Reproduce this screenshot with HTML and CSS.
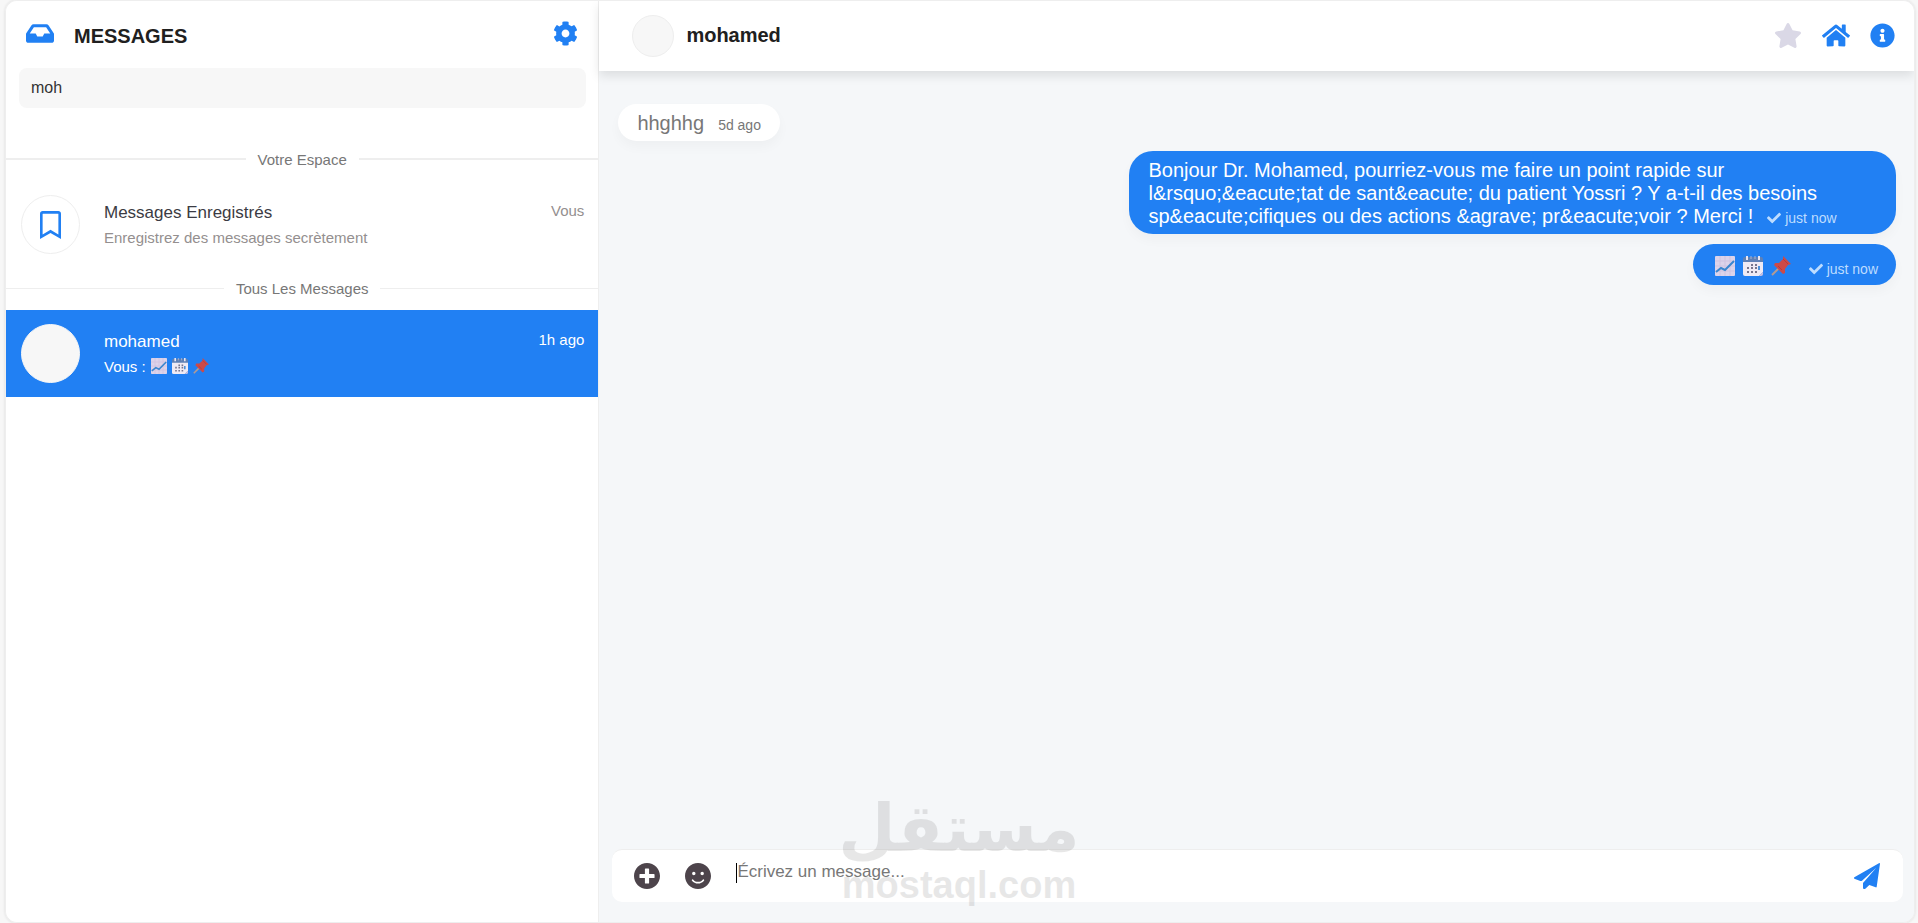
FILE: index.html
```html
<!DOCTYPE html>
<html lang="fr">
<head>
  <meta charset="UTF-8" />
  <meta name="viewport" content="width=device-width, initial-scale=1.0"/>
  <title>Messages</title>
  <link rel="stylesheet" href="styles.css">
</head>
<body>
  <!-- shared icons -->
  <svg class="sprite" aria-hidden="true">
    <symbol id="check" viewBox="0 0 512 512"><path d="M173.898 439.404l-166.4-166.4c-9.997-9.997-9.997-26.206 0-36.204l36.203-36.204c9.997-9.998 26.207-9.998 36.204 0L192 312.69 432.095 72.596c9.997-9.997 26.207-9.997 36.204 0l36.203 36.204c9.997 9.997 9.997 26.206 0 36.204l-294.4 294.401c-9.998 9.997-26.207 9.997-36.204-.001z"/></symbol>
    <symbol id="chart" viewBox="0 0 20 20">
      <rect width="20" height="20" rx="1" fill="#dcd3ea"/>
      <path d="M5 0v20M10 0v20M15 0v20M0 5h20M0 10h20M0 15h20" stroke="#cfc3e0" stroke-width="1"/>
      <path d="M1 16l5-4 4 2 9-9" fill="none" stroke="#3a86cf" stroke-width="2"/>
    </symbol>
    <symbol id="calendar" viewBox="0 0 20 20">
      <path d="M0 5h20v11l-4 4H2a2 2 0 0 1-2-2z" fill="#efeaf4"/>
      <path d="M0 6V3a2 2 0 0 1 2-2h16a2 2 0 0 1 2 2v3z" fill="#5f80b5"/>
      <path d="M4 0v4M16 0v4" stroke="#e9e6f1" stroke-width="2"/>
      <path d="M8 0v3M12 0v3" stroke="#a9b4d0" stroke-width="1"/>
      <path d="M20 16l-4 4h2a2 2 0 0 0 2-2z" fill="#cbbfe0"/>
      <path d="M8 8h2v2H8zM12 8h2v2h-2zM4 11h2v2H4zM8 11h2v2H8zM12 11h2v2h-2zM4 15h2v2H4zM8 15h2v2H8zM12 15h2v2h-2z" fill="#77758c"/>
      <path d="M15 10h2v4h-2z" fill="#4d90d8"/>
    </symbol>
    <symbol id="pin" viewBox="0 0 20 20">
      <path d="M1 19l7-7" stroke="#b39a93" stroke-width="2"/>
      <path d="M12 0l8 8-3 1-3 4v4l-2 1-9-9 1-2h4l4-4z" fill="#cd4a48"/>
      <path d="M12 3l5 5M7 10l4 4" stroke="#b93a3c" stroke-width="1"/>
    </symbol>
  </svg>

  <div class="messenger">
    <aside class="sidebar">
      <header class="sidebar-header">
        <svg class="inbox" viewBox="0 0 576 512" aria-hidden="true"><path d="M567.938 243.908L462.25 85.374A48.003 48.003 0 0 0 422.311 64H153.689a48 48 0 0 0-39.938 21.374L8.062 243.908A47.994 47.994 0 0 0 0 270.533V400c0 26.51 21.49 48 48 48h480c26.51 0 48-21.49 48-48V270.533a47.994 47.994 0 0 0-8.062-26.625zM162.252 128h251.497l85.333 128H376l-32 64H232l-32-64H76.918l85.334-128z"/></svg>
        <h1>MESSAGES</h1>
        <button class="icon-btn" aria-label="Paramètres">
          <svg class="icon" viewBox="0 0 512 512"><path d="M487.4 315.7l-42.6-24.6c4.3-23.2 4.3-47 0-70.2l42.6-24.6c4.9-2.8 7.1-8.6 5.5-14-11.1-35.6-30-67.8-54.7-94.6-3.8-4.1-10-5.1-14.8-2.3L380.8 110c-17.9-15.4-38.5-27.3-60.8-35.1V25.8c0-5.6-3.9-10.5-9.4-11.7-36.7-8.2-74.3-7.8-109.2 0-5.5 1.2-9.4 6.1-9.4 11.7V75c-22.2 7.9-42.8 19.8-60.8 35.1L88.7 85.5c-4.9-2.8-11-1.9-14.8 2.3-24.7 26.7-43.6 58.9-54.7 94.6-1.7 5.4.6 11.2 5.5 14L67.3 221c-4.3 23.2-4.3 47 0 70.2l-42.6 24.6c-4.9 2.8-7.1 8.6-5.5 14 11.1 35.6 30 67.8 54.7 94.6 3.8 4.1 10 5.1 14.8 2.3l42.6-24.6c17.9 15.4 38.5 27.3 60.8 35.1v49.2c0 5.6 3.9 10.5 9.4 11.7 36.7 8.2 74.3 7.8 109.2 0 5.5-1.2 9.4-6.1 9.4-11.7v-49.2c22.2-7.9 42.8-19.8 60.8-35.1l42.6 24.6c4.9 2.8 11 1.9 14.8-2.3 24.7-26.7 43.6-58.9 54.7-94.6 1.5-5.5-.7-11.3-5.6-14.1zM256 336c-44.1 0-80-35.9-80-80s35.9-80 80-80 80 35.9 80 80-35.9 80-80 80z"/></svg>
        </button>
      </header>
      <input type="text" class="search" aria-label="Rechercher" value="moh">

      <h2 class="divider divider-thick">Votre Espace</h2>
      <a href="#" class="contact">
        <span class="avatar avatar-saved"><svg class="bookmark" viewBox="0 0 384 512" aria-hidden="true"><path d="M336 0H48C21.49 0 0 21.49 0 48v464l192-112 192 112V48c0-26.51-21.49-48-48-48zm0 428.43l-144-84-144 84V54a6 6 0 0 1 6-6h276c3.314 0 6 2.683 6 5.996V428.43z"/></svg></span>
        <span class="contact-body">
          <span class="contact-name">Messages Enregistrés</span>
          <span class="contact-text">Enregistrez des messages secrètement</span>
        </span>
        <span class="contact-time">Vous</span>
      </a>

      <h2 class="divider">Tous Les Messages</h2>
      <a href="#" class="contact active">
        <span class="avatar"></span>
        <span class="contact-body">
          <span class="contact-name">mohamed</span>
          <span class="contact-text">Vous :
            <svg class="emoji-small"><use href="#chart"/></svg>
            <svg class="emoji-small"><use href="#calendar"/></svg>
            <svg class="emoji-small"><use href="#pin"/></svg>
          </span>
        </span>
        <span class="contact-time">1h ago</span>
      </a>
    </aside>

    <main class="chat">
      <header class="chat-header">
        <span class="avatar avatar-small"></span>
        <a href="#" class="chat-name">mohamed</a>
        <nav class="chat-actions">
          <button class="icon-btn favorite" aria-label="Favori">
            <svg class="icon-wide" viewBox="0 0 576 512"><path d="M259.3 17.8L194 150.2 47.9 171.5c-26.2 3.8-36.7 36.1-17.7 54.6l105.7 103-25 145.5c-4.5 26.3 23.2 46 46.4 33.7L288 439.6l130.7 68.7c23.2 12.2 50.9-7.4 46.4-33.7l-25-145.5 105.7-103c19-18.5 8.5-50.8-17.7-54.6L382 150.2 316.7 17.8c-11.7-23.6-45.6-23.9-57.4 0z"/></svg>
          </button>
          <a href="#" class="icon-btn" aria-label="Accueil">
            <svg class="icon-wide" viewBox="0 0 576 512"><path d="M280.37 148.26L96 300.11V464a16 16 0 0 0 16 16l112.06-.29a16 16 0 0 0 15.92-16V368a16 16 0 0 1 16-16h64a16 16 0 0 1 16 16v95.64a16 16 0 0 0 16 16.05L464 480a16 16 0 0 0 16-16V300L295.67 148.26a12.19 12.19 0 0 0-15.3 0zM571.6 251.47L488 182.56V44.05a12 12 0 0 0-12-12h-56a12 12 0 0 0-12 12v72.61L318.47 43a48 48 0 0 0-61 0L4.34 251.47a12 12 0 0 0-1.6 16.9l25.5 31A12 12 0 0 0 45.15 301l235.22-193.74a12.19 12.19 0 0 1 15.3 0L530.9 301a12 12 0 0 0 16.9-1.6l25.5-31a12 12 0 0 0-1.7-16.93z"/></svg>
          </a>
          <button class="icon-btn" aria-label="Détails">
            <svg class="icon" viewBox="0 0 512 512"><path d="M256 8C119.043 8 8 119.083 8 256c0 136.997 111.043 248 248 248s248-111.003 248-248C504 119.083 392.957 8 256 8zm0 110c23.196 0 42 18.804 42 42s-18.804 42-42 42-42-18.804-42-42 18.804-42 42-42zm56 254c0 6.627-5.373 12-12 12h-88c-6.627 0-12-5.373-12-12v-24c0-6.627 5.373-12 12-12h12v-64h-12c-6.627 0-12-5.373-12-12v-24c0-6.627 5.373-12 12-12h64c6.627 0 12 5.373 12 12v100h12c6.627 0 12 5.373 12 12v24z"/></svg>
          </button>
        </nav>
      </header>

      <section class="messages">
        <div class="message">hhghhg<span class="message-time">5d ago</span></div>
        <div class="message sent">Bonjour Dr. Mohamed, pourriez-vous me faire un point rapide sur l&amp;rsquo;&amp;eacute;tat de sant&amp;eacute; du patient Yossri ? Y a-t-il des besoins sp&amp;eacute;cifiques ou des actions &amp;agrave; pr&amp;eacute;voir ? Merci !<span class="message-time"><svg class="check"><use href="#check"/></svg>just now</span></div>
        <div class="message sent message-emoji">
          <svg class="emoji"><use href="#chart"/></svg>
          <svg class="emoji"><use href="#calendar"/></svg>
          <svg class="emoji"><use href="#pin"/></svg>
          <span class="message-time"><svg class="check"><use href="#check"/></svg>just now</span>
        </div>
      </section>

      <form class="composer">
        <button type="button" class="icon-btn composer-btn" aria-label="Joindre un fichier">
          <svg class="icon-large" viewBox="8 8 496 496"><path d="M256 8C119 8 8 119 8 256s111 248 248 248 248-111 248-248S393 8 256 8zm144 276c0 6.6-5.4 12-12 12h-92v92c0 6.6-5.4 12-12 12h-56c-6.6 0-12-5.4-12-12v-92h-92c-6.6 0-12-5.4-12-12v-56c0-6.6 5.4-12 12-12h92v-92c0-6.6 5.4-12 12-12h56c6.6 0 12 5.4 12 12v92h92c6.6 0 12 5.4 12 12v56z"/></svg>
        </button>
        <button type="button" class="icon-btn composer-btn" aria-label="Emoji">
          <svg class="icon-large" viewBox="0 8 496 496"><path d="M248 8C111 8 0 119 0 256s111 248 248 248 248-111 248-248S385 8 248 8zm80 168c17.7 0 32 14.3 32 32s-14.3 32-32 32-32-14.3-32-32 14.3-32 32-32zm-160 0c17.7 0 32 14.3 32 32s-14.3 32-32 32-32-14.3-32-32 14.3-32 32-32zm194.8 170.2C334.3 380.4 292.5 400 248 400s-86.3-19.6-114.8-53.8c-13.6-16.3 11-36.7 24.6-20.5 22.4 26.9 55.2 42.2 90.2 42.2s67.8-15.4 90.2-42.2c13.4-16.2 38.1 4.2 24.6 20.5z"/></svg>
        </button>
        <span class="caret"></span>
        <textarea class="composer-input" rows="1" aria-label="Message" placeholder="Écrivez un message..."></textarea>
        <button class="icon-btn" aria-label="Envoyer">
          <svg class="icon-large" viewBox="0 0 78 78"><path d="M1 43L76 0q2 0 2 2L68 72q-1 2-3 1L46 66l-12 11q-6 2-7-1V60L67 14 24 53q-2 2-5 1L1 47q-2-2 0-4z"/></svg>
        </button>
      </form>
    </main>
  </div>

  <div class="watermark" aria-hidden="true">
    <span class="watermark-ar" lang="ar" dir="rtl">مستقل</span>
    <span class="watermark-en">mostaql.com</span>
  </div>
</body>
</html>
```
FILE: styles.css
```css
:root {
  --primary: #2180f3;
  --page-bg: #f7f7f7;
  --chat-bg: #f5f7f9;
  --border: #eeeeee;
  --text: #202020;
  --text-secondary: #777777;
}

* {
  margin: 0;
  padding: 0;
  box-sizing: border-box;
}

body {
  background: var(--page-bg);
  color: var(--text);
  font-family: "Liberation Sans", Arial, sans-serif;
  height: 100vh;
  padding: 0 3px 0 5px;
}

a {
  color: inherit;
  text-decoration: none;
}

svg {
  fill: currentColor;
}

.sprite {
  display: none;
}

.messenger {
  display: flex;
  height: 100%;
  border: 1px solid var(--border);
  border-radius: 12px;
  box-shadow: 0 0 3px rgba(0, 0, 0, 0.12);
  overflow: hidden;
}

/* sidebar */
.sidebar {
  width: 31.1%;
  background: #fff;
  border-right: 1px solid var(--border);
}

.sidebar-header {
  display: flex;
  align-items: flex-start;
  gap: 20px;
  height: 67px;
  padding: 20px 20px 0;
}

.sidebar-header h1 {
  flex: 1;
  font-size: 20px;
  line-height: 30px;
}

.inbox {
  width: 28px;
  height: 25px;
  color: var(--primary);
}

.icon-btn {
  display: flex;
  background: none;
  border: none;
  color: var(--primary);
  cursor: pointer;
}

.icon {
  width: 25px;
  height: 25px;
}

.icon-wide {
  width: 28px;
  height: 25px;
}

.icon-large {
  width: 26px;
  height: 26px;
}

.search {
  display: block;
  width: calc(100% - 25px);
  height: 40px;
  margin: 0 12px 31px 13px;
  padding: 0 12px;
  background: var(--page-bg);
  border: none;
  border-radius: 8px;
  color: #333;
  font: inherit;
  font-size: 16px;
}

.divider {
  display: flex;
  align-items: center;
  gap: 12px;
  height: 42px;
  padding-bottom: 2px;
  color: var(--text-secondary);
  font-size: 15px;
  font-weight: normal;
}

.divider::before,
.divider::after {
  content: "";
  flex: 1;
  height: 1px;
  background: var(--border);
}

.divider-thick::before,
.divider-thick::after {
  height: 2px;
}

.contact {
  display: flex;
  gap: 24px;
  padding: 14px 14px 14px 15px;
}

.avatar {
  display: flex;
  align-items: center;
  justify-content: center;
  flex-shrink: 0;
  width: 59px;
  height: 59px;
  background: var(--page-bg);
  border: 1px solid var(--border);
  border-radius: 50%;
}

.avatar-saved {
  background: #fff;
  color: var(--primary);
}

.avatar-small {
  width: 42px;
  height: 42px;
}

.bookmark {
  width: 21px;
  height: 28px;
}

.contact-body {
  display: flex;
  flex-direction: column;
  flex: 1;
  gap: 5px;
  padding-top: 8px;
}

.contact-name {
  color: #3b3b43;
  font-size: 17px;
  line-height: 20px;
}

.contact-text,
.contact-time {
  color: #948f8f;
  font-size: 15px;
  line-height: 20px;
}

.contact-time {
  padding-top: 6px;
}

.active {
  background: var(--primary);
}

.active .avatar {
  border-color: var(--page-bg);
}

.active .contact-name,
.active .contact-text,
.active .contact-time {
  color: #fff;
}

.emoji-small {
  width: 16px;
  height: 16px;
  margin-left: 1px;
  vertical-align: -2px;
}

/* conversation */
.chat {
  display: flex;
  flex-direction: column;
  flex: 1;
  min-width: 0;
  background: var(--chat-bg);
}

.chat-header {
  display: flex;
  align-items: center;
  gap: 12px;
  height: 70px;
  padding: 0 19px 0 33px;
  background: #fff;
  box-shadow: 0 5px 10px rgba(0, 0, 0, 0.1);
}

.chat-name {
  padding-bottom: 2px;
  font-size: 20px;
  font-weight: bold;
}

.chat-actions {
  display: flex;
  gap: 20px;
  margin-left: auto;
  padding-bottom: 2px;
}

.favorite {
  color: #dad8e6;
}

.messages {
  display: flex;
  flex-direction: column;
  align-items: flex-start;
  flex: 1;
  gap: 10px;
  padding: 33px 18px 0 19px;
}

.message {
  max-width: 60%;
  padding: 8px 19px 6px;
  background: #fff;
  border-radius: 24px;
  box-shadow: 0 6px 12px rgba(0, 0, 0, 0.03);
  color: var(--text-secondary);
  font-size: 20px;
  line-height: 23px;
}

.sent {
  align-self: flex-end;
  background: var(--primary);
  color: #fff;
}

.message-time {
  margin-left: 14px;
  font-size: 14px;
  line-height: 14px;
}

.sent .message-time {
  color: #bddcff;
}

.check {
  width: 14px;
  height: 14px;
  margin-right: 4px;
  vertical-align: -2px;
}

.message-emoji {
  display: flex;
  align-items: flex-end;
  gap: 8px;
  padding: 12px 18px 9px 22px;
}

.emoji {
  width: 20px;
  height: 20px;
}

.message-emoji .message-time {
  margin-left: 10px;
}

.composer {
  display: flex;
  align-items: center;
  height: 53px;
  margin: 0 11px 20px 13px;
  padding: 0 23px 0 22px;
  background: #fff;
  border-top: 1px solid var(--border);
  border-radius: 10px;
}

.composer-btn {
  margin-right: 25px;
  color: #4d444b;
}

.caret {
  width: 1px;
  height: 20px;
  margin-bottom: 6px;
  background: #000;
}

.composer-input {
  flex: 1;
  height: 20px;
  margin-bottom: 8px;
  background: none;
  border: none;
  outline: none;
  resize: none;
  font: inherit;
  font-size: 17px;
  line-height: 20px;
}

.composer-input::placeholder {
  color: var(--text-secondary);
}

/* logo laid over the page */
.watermark {
  position: absolute;
  left: 0;
  right: 0;
  bottom: 16px;
  display: flex;
  flex-direction: column;
  align-items: center;
  color: #000;
  opacity: 0.09;
  font-weight: bold;
  pointer-events: none;
}

.watermark-ar {
  font-family: "DejaVu Sans", sans-serif;
  font-size: 66px;
  line-height: 68px;
}

.watermark-en {
  font-size: 38px;
  line-height: 44px;
}
```
